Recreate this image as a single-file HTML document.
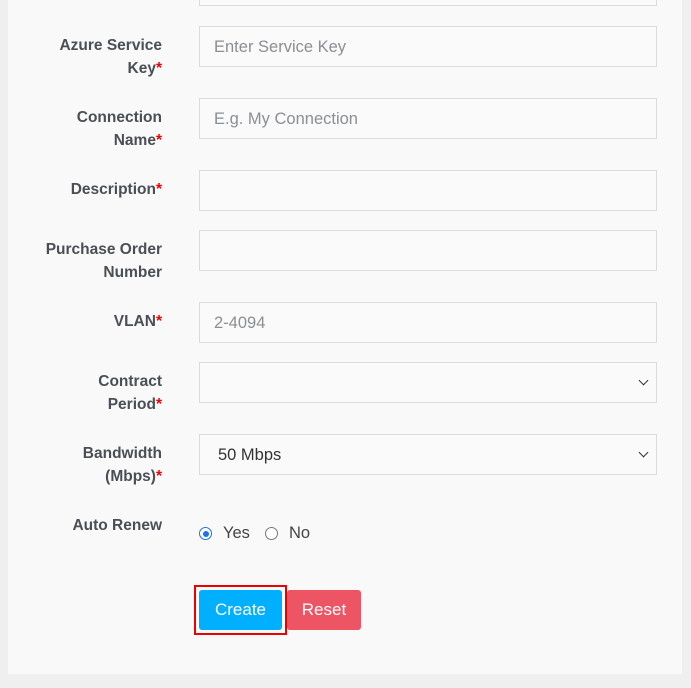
<!DOCTYPE html>
<html><head><style>
body{margin:0;width:691px;height:688px;background:#efefef;font-family:"Liberation Sans",sans-serif;position:relative;overflow:hidden}
.panel{position:absolute;left:8px;top:-10px;width:674px;height:684px;background:#f9f9f9}
.lbl{position:absolute;right:529px;text-align:right;font-size:15.5px;font-weight:bold;color:#4a4f55;line-height:23px;width:160px}
.lbl b{color:#e00;}
.inp{position:absolute;left:199px;width:456px;height:39px;border:1px solid #dcdcdc;background:#fafafa;box-sizing:content-box;font-size:16.5px;color:#8a8f94;line-height:41px;text-indent:14px}
.dd{color:#333;text-indent:18px}
.chev{position:absolute;right:9px;top:14px;width:6px;height:6px;border-right:1.6px solid #333;border-bottom:1.6px solid #333;transform:rotate(45deg)}
</style></head><body>
<div class="panel"></div>
<div style="position:absolute;left:199px;top:-5px;width:456px;height:9px;border:1px solid #dcdcdc;background:#fafafa"></div>
<div class="lbl" style="top:34px">Azure Service<br>Key<b>*</b></div>
<div class="inp" style="top:26px">Enter Service Key</div>
<div class="lbl" style="top:106px">Connection<br>Name<b>*</b></div>
<div class="inp" style="top:98px">E.g. My Connection</div>
<div class="lbl" style="top:178px">Description<b>*</b></div>
<div class="inp" style="top:170px"></div>
<div class="lbl" style="top:238px">Purchase Order<br>Number</div>
<div class="inp" style="top:230px"></div>
<div class="lbl" style="top:310px">VLAN<b>*</b></div>
<div class="inp" style="top:302px">2-4094</div>
<div class="lbl" style="top:370px">Contract<br>Period<b>*</b></div>
<div class="inp dd" style="top:362px"><span class="chev"></span></div>
<div class="lbl" style="top:442px">Bandwidth<br>(Mbps)<b>*</b></div>
<div class="inp dd" style="top:434px">50 Mbps<span class="chev"></span></div>
<div class="lbl" style="top:514px">Auto Renew</div>
<div style="position:absolute;left:199px;top:527px;width:13px;height:13px;border:1px solid #1a73e8;border-radius:50%;box-sizing:border-box;background:#fff"><div style="margin:2.5px;width:6px;height:6px;border-radius:50%;background:#1a73e8"></div></div>
<div style="position:absolute;left:223px;top:524px;font-size:16.5px;color:#444">Yes</div>
<div style="position:absolute;left:265px;top:527px;width:13px;height:13px;border:1px solid #777;border-radius:50%;box-sizing:border-box;background:#fff"></div>
<div style="position:absolute;left:289px;top:524px;font-size:16.5px;color:#444">No</div>
<div style="position:absolute;left:194px;top:585px;width:93px;height:50px;border:2px solid #e00;box-sizing:border-box"></div>
<div style="position:absolute;left:199px;top:590px;width:83px;height:40px;background:#00b0ff;border-radius:3px;color:#fff;font-size:17px;line-height:40px;text-align:center">Create</div>
<div style="position:absolute;left:287px;top:590px;width:74px;height:40px;background:#ed5565;border-radius:3px;color:#fff;font-size:17px;line-height:40px;text-align:center">Reset</div>
</body></html>
